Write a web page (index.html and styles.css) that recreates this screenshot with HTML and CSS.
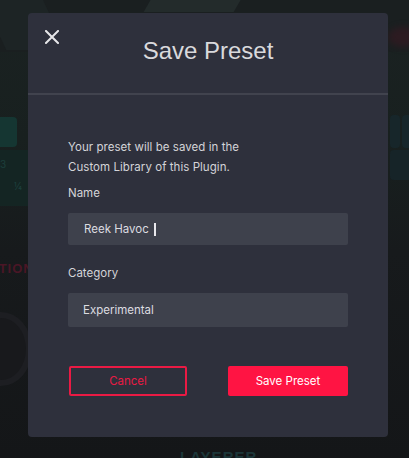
FILE: index.html
```html
<!DOCTYPE html>
<html lang="en">
<head>
<meta charset="utf-8">
<title>Save Preset</title>
<link rel="stylesheet" href="styles.css">
</head>
<body>
<div class="app">
  <div class="bg-top"></div>
  <div class="bg-shard bg-shard-a"></div>
  <div class="bg-shard bg-shard-b"></div>
  <div class="bg-glow"></div>
  <div class="bg-tile bg-tile-l"></div>
  <div class="bg-grid bg-grid-l"><span>3</span><span>¼</span></div>
  <div class="bg-tile bg-tile-r1"></div>
  <div class="bg-tile bg-tile-r2"></div>
  <div class="bg-tile bg-tile-r3"></div>
  <div class="bg-label-red">EDITION</div>
  <div class="bg-knob"></div>
  <div class="bg-label-teal">LAYERER</div>
</div>
<div class="overlay">
  <div class="modal">
    <div class="modal-header">
      <button class="close" aria-label="Close">
        <svg width="14" height="14" viewBox="0 0 14 14"><path d="M1 1 L13 13 M13 1 L1 13" stroke="#e6e6e9" stroke-width="2" stroke-linecap="square" fill="none"/></svg>
      </button>
      <h1 class="title">Save Preset</h1>
    </div>
    <div class="modal-body">
      <p class="intro">Your preset will be saved in the<br>Custom Library of this Plugin.</p>
      <label class="label">Name</label>
      <div class="field field-name"><span>Reek Havoc</span><span class="caret"></span></div>
      <label class="label label-cat">Category</label>
      <div class="field field-cat"><span>Experimental</span></div>
      <div class="actions">
        <button class="btn btn-cancel">Cancel</button>
        <button class="btn btn-save">Save Preset</button>
      </div>
    </div>
  </div>
</div>
</body>
</html>
```
FILE: styles.css
```css
html, body {
  margin: 0;
  padding: 0;
  width: 409px;
  height: 458px;
  overflow: hidden;
  background: #151719;
  font-family: Inter, "Noto Sans", sans-serif;
}
.app {
  position: absolute;
  inset: 0;
  background: linear-gradient(180deg, #1b2222 0%, #18201f 30%, #171a1c 55%, #141618 100%);
  overflow: hidden;
}
.bg-top {
  position: absolute;
  left: 0; top: 0; right: 0; height: 52px;
  background: #1a1f20;
}
.bg-shard {
  position: absolute;
}
.bg-shard-a {
  left: -10px; top: -20px; width: 60px; height: 70px;
  transform: skewX(25deg);
  background: #1d2425;
}
.bg-shard-b {
  left: 150px; top: -10px; width: 90px; height: 22px;
  background: #232b2b;
  transform: skewX(-30deg);
}
.bg-glow {
  position: absolute;
  left: 388px; top: 27px; width: 30px; height: 20px;
  border-radius: 50%;
  background: #2c1b21;
  filter: blur(3px);
}
.bg-tile {
  position: absolute;
  border-radius: 4px;
}
.bg-tile-l {
  left: -10px; top: 117px; width: 27px; height: 30px;
  background: #153632;
}
.bg-grid {
  position: absolute;
  display: flex;
  color: #1c3f3b;
  font-size: 10px;
}
.bg-grid-l {
  left: 0; top: 150px; width: 28px; height: 56px;
  background: #142523;
  flex-direction: column;
  gap: 10px;
  padding-top: 8px;
  box-sizing: border-box;
}
.bg-grid-l span + span { padding-left: 14px; }
.bg-tile-r1 {
  left: 390px; top: 115px; width: 10px; height: 33px;
  background: #17262a;
}
.bg-tile-r2 {
  left: 402px; top: 115px; width: 12px; height: 33px;
  background: #17262a;
}
.bg-tile-r3 {
  left: 390px; top: 150px; width: 24px; height: 30px;
  background: #162428;
}
.bg-label-red {
  position: absolute;
  left: -26px; top: 261px;
  font-family: "Liberation Sans", sans-serif;
  font-weight: bold;
  font-size: 13px;
  letter-spacing: 1px;
  color: #4a1626;
}
.bg-knob {
  position: absolute;
  left: -30px; top: 312px;
  width: 50px; height: 62px;
  border-radius: 50%;
  border: 6px solid #1d1e22;
  background: #18191c;
}
.bg-label-teal {
  position: absolute;
  left: 180px; top: 448px;
  font-family: "Liberation Sans", sans-serif;
  font-weight: bold;
  font-size: 15px;
  letter-spacing: 1px;
  color: #1c3639;
}
.overlay {
  position: absolute;
  inset: 0;
  padding: 13px 0 0 28px;
  box-sizing: border-box;
}
.modal {
  position: relative;
  width: 360px;
  height: 424px;
  background: #2e303c;
  border-radius: 4px;
  box-sizing: border-box;
}
.modal-header {
  position: relative;
  height: 56px;
  border-bottom: 2px solid #41434e;
  display: flex;
  justify-content: center;
  padding-top: 24px;
}
.close {
  position: absolute;
  left: 17px; top: 17px;
  width: 14px; height: 14px;
  padding: 0; margin: 0;
  border: 0;
  background: none;
  display: block;
}
.close svg { display: block; }
.title {
  margin: 0;
  font-family: "Liberation Sans", Arial, sans-serif;
  font-weight: normal;
  font-size: 24px;
  line-height: 28px;
  color: #d9d9dc;
}
.modal-body {
  padding: 42px 40px 0 40px;
  display: flex;
  flex-direction: column;
}
.intro {
  margin: 0;
  font-size: 11.5px;
  line-height: 20px;
  letter-spacing: 0.05px;
  color: #d4d4d8;
}
.label {
  display: block;
  margin-top: 6px;
  font-size: 11.5px;
  line-height: 20px;
  color: #d4d4d8;
}
.label-cat {
  margin-top: 18px;
}
.field {
  margin-top: 10px;
  height: 32px;
  background: #3e414c;
  border-radius: 2px;
  display: flex;
  align-items: center;
  padding-left: 16px;
  font-size: 11.5px;
  color: #dcdce0;
}
.field-cat {
  height: 34px;
  padding-left: 15px;
}
.caret {
  display: inline-block;
  width: 2px;
  height: 13px;
  margin-left: 5px;
  background: #e8e8ec;
}
.actions {
  margin-top: 39px;
  display: flex;
  justify-content: space-between;
}
.btn {
  height: 30px;
  border-radius: 2px;
  font-family: Inter, "Noto Sans", sans-serif;
  font-size: 11.5px;
  padding: 0;
  cursor: pointer;
}
.btn-cancel {
  margin-left: 1px;
  width: 118px;
  background: transparent;
  border: 2px solid #ea1a44;
  color: #ea1a44;
}
.btn-save {
  width: 120px;
  background: #ff1443;
  border: 0;
  color: #ffffff;
}
```
